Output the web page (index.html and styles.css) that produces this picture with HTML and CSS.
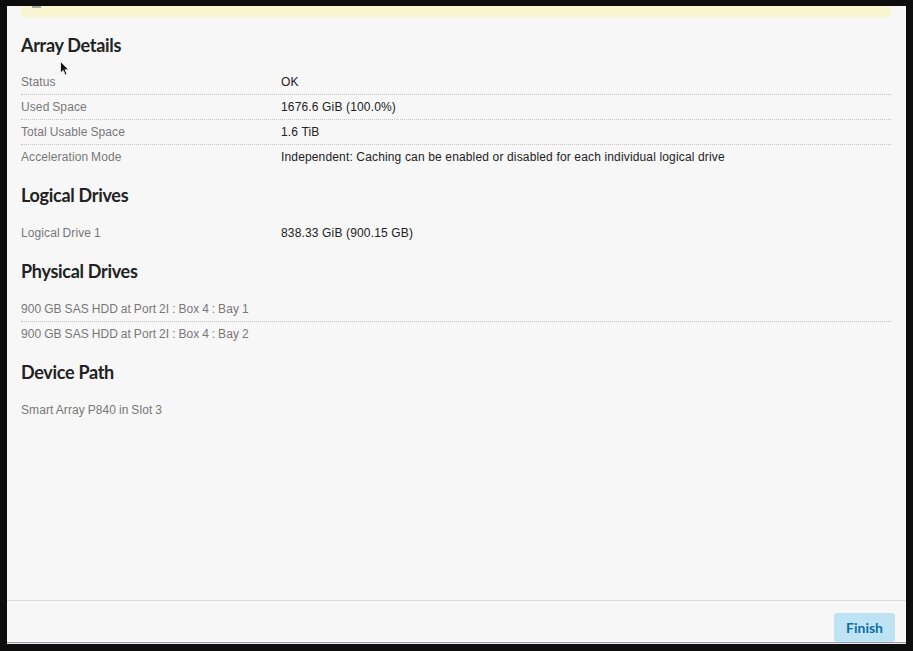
FILE: index.html
```html
<!DOCTYPE html>
<html lang="en">
<head>
    <meta charset="UTF-8">
    <meta name="viewport" content="width=device-width, initial-scale=1.0">
    <title>Array Details</title>
    <link rel="stylesheet" href="styles.css">
</head>
<body>
    <div class="dialog">
        <div class="dialog-body">
            <!-- status banner, scrolled mostly out of view -->
            <div class="banner">
                <span class="banner-icon"></span>
            </div>

            <h2 class="first">Array Details</h2>
            <div class="prop-list">
                <div class="prop-row"><span class="label">Status</span><span class="value">OK</span></div>
                <div class="prop-row"><span class="label">Used Space</span><span class="value">1676.6 GiB (100.0%)</span></div>
                <div class="prop-row"><span class="label">Total Usable Space</span><span class="value">1.6 TiB</span></div>
                <div class="prop-row"><span class="label">Acceleration Mode</span><span class="value">Independent: Caching can be enabled or disabled for each individual logical drive</span></div>
            </div>

            <h2>Logical Drives</h2>
            <div class="prop-list">
                <div class="prop-row"><span class="label">Logical Drive 1</span><span class="value">838.33 GiB (900.15 GB)</span></div>
            </div>

            <h2>Physical Drives</h2>
            <div class="prop-list">
                <div class="prop-row"><span class="label">900 GB SAS HDD at Port 2I : Box 4 : Bay 1</span></div>
                <div class="prop-row"><span class="label">900 GB SAS HDD at Port 2I : Box 4 : Bay 2</span></div>
            </div>

            <h2>Device Path</h2>
            <div class="prop-list">
                <div class="prop-row"><span class="label">Smart Array P840 in Slot 3</span></div>
            </div>
        </div>

        <div class="dialog-footer">
            <button type="button" class="btn-finish">Finish</button>
        </div>
    </div>

    <!-- mouse pointer left in the capture -->
    <svg class="cursor" width="10" height="16" viewBox="0 0 10 16">
        <path d="M0.5 0.5 L0.5 12 L3.2 9.4 L5.2 14 L7 13.2 L5 8.7 L8.6 8.7 Z" fill="#111" stroke="#f7f7f7" stroke-width="0.8"/>
    </svg>
</body>
</html>
```

FILE: styles.css
```css
body {
    margin: 0;
    background: #0d0d0d;
    font-family: "Liberation Sans", Arial, sans-serif;
    font-size: 12px;
    letter-spacing: 0.15px;
    height: 651px;
    overflow: hidden;
    position: relative;
}
.dialog {
    margin: 6px 7px 0 7px;
    height: 636px;
    background: #f7f7f7;
    display: flex;
    flex-direction: column;
    border-bottom: 1px solid #9a9ca6;
    box-shadow: 0 1px 0 #e8e8e8;
}
.dialog-body {
    flex: 1;
    overflow: hidden;
    padding: 0 15px 0 14px;
}
.banner {
    height: 40px;
    margin-top: -29px;
    background: #f8f6d0;
    display: flex;
    align-items: flex-end;
    padding-left: 11px;
}
.banner-icon {
    width: 9px;
    height: 2px;
    background: #aaa;
    margin-bottom: 9px;
}
h2 {
    font-family: Lato, "Open Sans", sans-serif;
    font-weight: 700;
    font-size: 18px;
    line-height: 24px;
    color: #222;
    margin: 14px 0 14px 0;
    letter-spacing: -0.3px;
}
h2.first {
    margin: 16px 0 13px 0;
}
.prop-row {
    display: grid;
    grid-template-columns: 260px 1fr;
    height: 24px;
    line-height: 24px;
    border-bottom: 1px dotted #c4c4c4;
}
.prop-row:last-child {
    border-bottom: none;
}
.label {
    color: #777;
    letter-spacing: 0.1px;
    word-spacing: -0.6px;
}
.value {
    color: #222;
}
.dialog-footer {
    border-top: 1px solid #dadada;
    height: 41px;
    display: flex;
    justify-content: flex-end;
    align-items: flex-end;
    padding-right: 11px;
}
.btn-finish {
    background: #bee3f4;
    color: #0b6ea6;
    border: none;
    border-radius: 3px;
    font-family: Lato, "Open Sans", sans-serif;
    font-weight: 700;
    font-size: 14px;
    width: 61px;
    height: 29px;
    padding: 0;
    cursor: pointer;
}
.cursor {
    position: absolute;
    left: 60px;
    top: 61px;
}
```
